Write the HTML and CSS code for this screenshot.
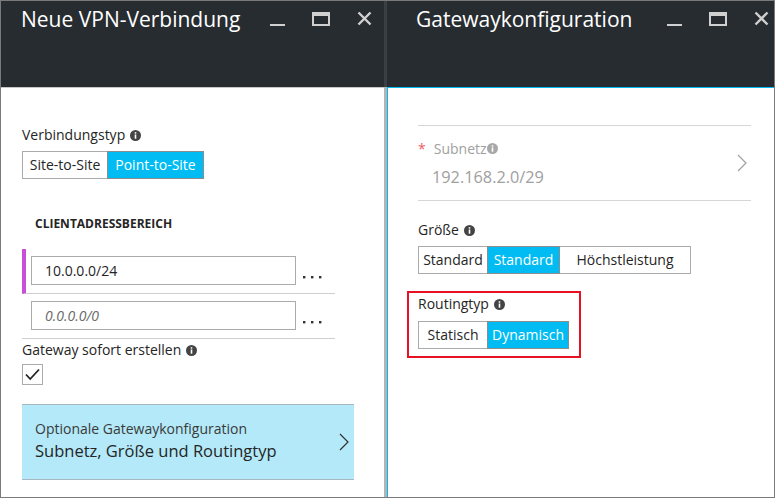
FILE: index.html
```html
<!DOCTYPE html>
<html lang="de">
<head>
<meta charset="utf-8">
<title>VPN</title>
<link rel="stylesheet" href="styles.css">
</head>
<body>
<div class="frame">
  <section class="blade left">
    <header class="bhead">
      <h1 class="title">Neue VPN-Verbindung</h1>
      <div class="ctrls">
        <span class="min"></span>
        <span class="max"></span>
        <svg class="close" width="15" height="15" viewBox="0 0 15 15"><path d="M1.5 1.5L13.5 13.5M13.5 1.5L1.5 13.5" stroke="#d0d0d0" stroke-width="2.4" fill="none"/></svg>
      </div>
    </header>
    <div class="bbody lbody">
      <div class="label l-vtyp">Verbindungstyp <svg class="info" width="11" height="11" viewBox="0 0 11 11"><circle cx="5.5" cy="5.5" r="5.5" fill="#444"/><rect x="4.7" y="4.5" width="1.6" height="4.2" fill="#fff"/><rect x="4.7" y="2.2" width="1.6" height="1.5" fill="#fff"/></svg></div>
      <div class="toggle">
        <span class="opt w85">Site-to-Site</span><span class="opt sel w96">Point-to-Site</span>
      </div>
      <div class="sechead">CLIENTADRESSBEREICH</div>
      <div class="row active">
        <div class="inp">10.0.0.0/24</div>
        <svg class="dots" width="20" height="3" viewBox="0 0 20 3"><rect x="0" y="0" width="2.4" height="2.4" fill="#333"/><rect x="8" y="0" width="2.4" height="2.4" fill="#333"/><rect x="16" y="0" width="2.4" height="2.4" fill="#333"/></svg>
      </div>
      <div class="row">
        <div class="inp ph">0.0.0.0/0</div>
        <svg class="dots" width="20" height="3" viewBox="0 0 20 3"><rect x="0" y="0" width="2.4" height="2.4" fill="#333"/><rect x="8" y="0" width="2.4" height="2.4" fill="#333"/><rect x="16" y="0" width="2.4" height="2.4" fill="#333"/></svg>
      </div>
      <div class="label l-gw">Gateway sofort erstellen <svg class="info" width="11" height="11" viewBox="0 0 11 11"><circle cx="5.5" cy="5.5" r="5.5" fill="#444"/><rect x="4.7" y="4.5" width="1.6" height="4.2" fill="#fff"/><rect x="4.7" y="2.2" width="1.6" height="1.5" fill="#fff"/></svg></div>
      <div class="check"><svg width="15" height="13" viewBox="0 0 15 13"><path d="M1 6.5L5.2 11L14 1.5" stroke="#222" stroke-width="1.8" fill="none"/></svg></div>
      <div class="card">
        <div class="card-text">
          <div class="card-sub">Optionale Gatewaykonfiguration</div>
          <div class="card-main">Subnetz, Größe und Routingtyp</div>
        </div>
        <svg class="chev" width="10" height="18" viewBox="0 0 10 18"><path d="M1 1L9 9L1 17" stroke="#333" stroke-width="1.2" fill="none"/></svg>
      </div>
    </div>
  </section>
  <div class="divider"></div>
  <section class="blade right">
    <header class="bhead">
      <h1 class="title">Gatewaykonfiguration</h1>
      <div class="ctrls">
        <span class="min"></span>
        <span class="max"></span>
        <svg class="close" width="15" height="15" viewBox="0 0 15 15"><path d="M1.5 1.5L13.5 13.5M13.5 1.5L1.5 13.5" stroke="#d0d0d0" stroke-width="2.4" fill="none"/></svg>
      </div>
    </header>
    <div class="bbody rbody">
      <div class="subnet">
        <div class="subnet-text">
          <div class="subnet-label"><span class="req">*</span> Subnetz<svg class="info" width="11" height="11" viewBox="0 0 11 11"><circle cx="5.5" cy="5.5" r="5.5" fill="#a8a8a8"/><rect x="4.7" y="4.5" width="1.6" height="4.2" fill="#fff"/><rect x="4.7" y="2.2" width="1.6" height="1.5" fill="#fff"/></svg></div>
          <div class="subnet-val">192.168.2.0/29</div>
        </div>
        <svg class="chev" width="10" height="18" viewBox="0 0 10 18"><path d="M1 1L9 9L1 17" stroke="#a0a0a0" stroke-width="1.2" fill="none"/></svg>
      </div>
      <div class="label l-gr">Größe <svg class="info" width="11" height="11" viewBox="0 0 11 11"><circle cx="5.5" cy="5.5" r="5.5" fill="#444"/><rect x="4.7" y="4.5" width="1.6" height="4.2" fill="#fff"/><rect x="4.7" y="2.2" width="1.6" height="1.5" fill="#fff"/></svg></div>
      <div class="toggle">
        <span class="opt w69">Standard</span><span class="opt sel w72">Standard</span><span class="opt w131">Höchstleistung</span>
      </div>
      <div class="highlight">
        <div class="label l-rt">Routingtyp <svg class="info" width="11" height="11" viewBox="0 0 11 11"><circle cx="5.5" cy="5.5" r="5.5" fill="#444"/><rect x="4.7" y="4.5" width="1.6" height="4.2" fill="#fff"/><rect x="4.7" y="2.2" width="1.6" height="1.5" fill="#fff"/></svg></div>
        <div class="toggle">
          <span class="opt w69">Statisch</span><span class="opt sel w81">Dynamisch</span>
        </div>
      </div>
    </div>
  </section>
</div>
</body>
</html>
```

FILE: styles.css
```css
* { box-sizing: border-box; }
html, body { margin: 0; padding: 0; background: #fff; }
body {
  font-family: "Segoe UI", "Open Sans", "Noto Sans", sans-serif;
  color: #252525;
}
.frame {
  width: 775px;
  height: 498px;
  border: 1px solid #7a7a7a;
  display: flex;
  overflow: hidden;
}
.blade { display: flex; flex-direction: column; height: 100%; }
.left { width: 383px; }
.right { flex: 1; }
.divider {
  width: 3px;
  background: linear-gradient(#3a3f44 0 86px, #b4b4b4 86px);
}
.bhead {
  height: 86px;
  background: #272c31;
  display: flex;
  align-items: flex-start;
  justify-content: space-between;
  flex: none;
}
.title {
  margin: 4px 0 0 20px;
  font-weight: 400;
  font-size: 21px;
  line-height: 28px;
  color: #fff;
}
.right .title { margin-left: 29px; }
.ctrls {
  display: flex;
  align-items: flex-start;
  margin-top: 10px;
}
.min {
  display: block;
  width: 15px;
  height: 2px;
  background: #d0d0d0;
  margin-top: 13px;
}
.max {
  display: block;
  width: 18px;
  height: 14px;
  border: 2px solid #d0d0d0;
  border-top-width: 4px;
  margin: 1px 0 0 27px;
}
.close { margin: 0 1px 0 27px; }
.right .ctrls { margin-right: 4px; }
.left .ctrls { margin-right: 11px; }

.bbody { flex: 1; }
.lbody {
  border-top: 1px solid #c8c8c8;
  padding-left: 21px;
}
.rbody {
  border-top: 1px solid #00bcf2;
  border-left: 1px solid #00bcf2;
  padding-left: 30px;
}
.label {
  font-size: 14px;
  line-height: 18px;
  display: flex;
  align-items: center;
  gap: 5px;
}
.info { flex: none; }
.l-vtyp { margin-top: 38px; }
.toggle { display: flex; margin-top: 7px; }
.opt {
  height: 28px;
  border: 1px solid #ababab;
  font-size: 14px;
  line-height: 26px;
  text-align: center;
  white-space: nowrap;
  background: #fff;
  color: #252525;
}
.opt + .opt { margin-left: -1px; }
.opt.sel {
  background: #00bcf2;
  border-color: #8c8c8c;
  color: #fff;
  position: relative;
}
.w85 { width: 86px; }
.w96 { width: 97px; }
.w69 { width: 70px; }
.w72 { width: 73px; }
.w131 { width: 132px; }
.w81 { width: 82px; }

.sechead {
  margin: 37px 0 0 13px;
  font-size: 12px;
  font-weight: 700;
  line-height: 16px;
  color: #252525;
}
.row {
  width: 313px;
  height: 45px;
  border-bottom: 1px solid #cfcfcf;
  display: flex;
  align-items: flex-start;
  padding-left: 9px;
}
.sechead + .row { margin-top: 17px; }
.row.active { border-left: 4px solid #c94fd8; padding-left: 5px; }
.row .inp { margin-top: 7px; }
.inp {
  width: 265px;
  height: 29px;
  border: 1px solid #ababab;
  font-size: 14px;
  line-height: 27px;
  padding-left: 13px;
  color: #252525;
}
.inp.ph { font-style: italic; color: #6a6a6a; }
.dots {
  flex: none;
  margin: 27px 0 0 7px;
}
.l-gw { margin-top: 2px; }
.check {
  width: 21px;
  height: 21px;
  border: 1px solid #ababab;
  margin-top: 5px;
  display: flex;
  align-items: center;
  justify-content: center;
}
.card {
  margin-top: 19px;
  width: 332px;
  height: 76px;
  background: #b3e9f8;
  border-top: 1px solid #a5b8bf;
  border-bottom: 1px solid #a5b8bf;
  display: flex;
  align-items: center;
  justify-content: space-between;
  padding: 0 5px 0 13px;
}
.card-sub { font-size: 14px; line-height: 20px; color: #3a3a3a; margin-top: -2px; }
.card-main { font-size: 16.5px; line-height: 24px; color: #252525; }

.subnet {
  margin-top: 37px;
  width: 333px;
  border-top: 1px solid #d6d6d6;
  border-bottom: 1px solid #d6d6d6;
  height: 76px;
  display: flex;
  align-items: center;
  justify-content: space-between;
  padding-right: 4px;
}
.subnet-text { margin-top: 2px; }
.subnet-label {
  font-size: 14px;
  line-height: 18px;
  color: #a0a0a0;
  display: flex;
  align-items: center;
}
.req { color: #f05a66; margin-right: 8px; }
.subnet-val {
  font-size: 16.3px;
  line-height: 24px;
  color: #a0a0a0;
  margin: 7px 0 0 14px;
}
.l-gr { margin-top: 20px; }
.highlight {
  margin: 17px 0 0 -11px;
  width: 174px;
  height: 67px;
  border: 2px solid #e81123;
  padding: 2px 0 0 9px;
}
.highlight .toggle { margin-top: 8px; }
```
